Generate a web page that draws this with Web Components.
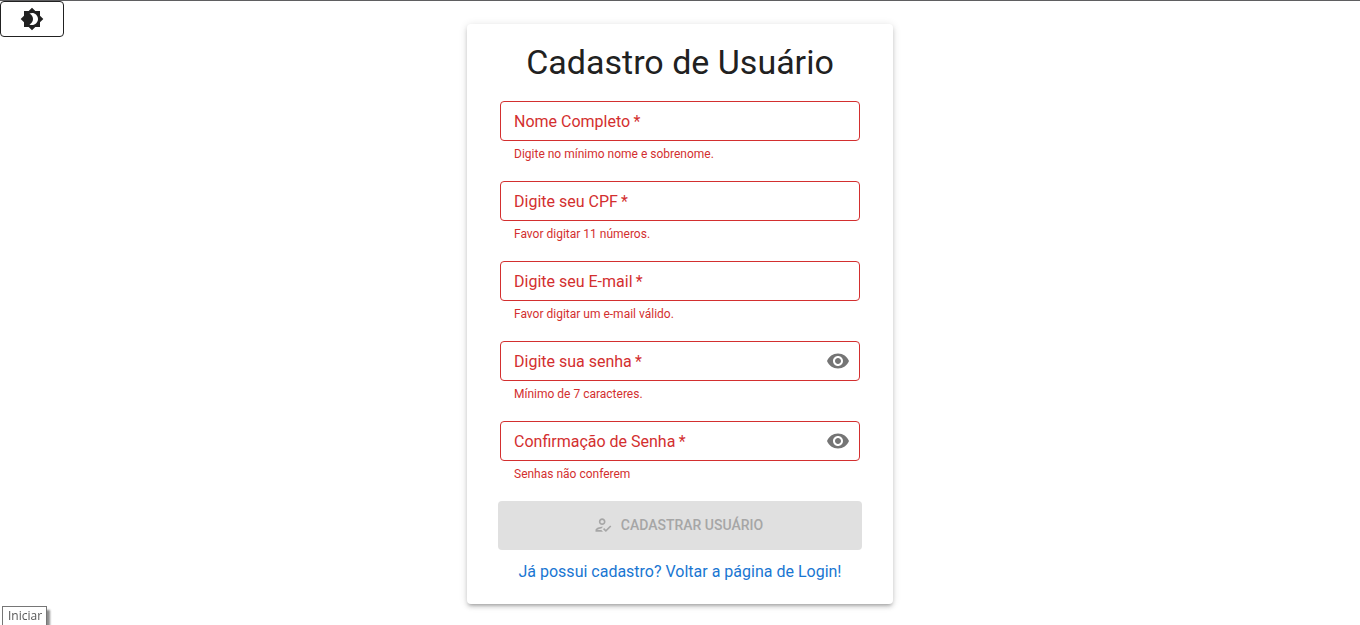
<!DOCTYPE html>
<html lang="pt-BR">
<head>
<meta charset="utf-8">
<meta name="viewport" content="width=device-width, initial-scale=1">
<title>Cadastro de Usuário</title>
<style>
  :root {
    --text: #212121;
    --error: #d32f2f;
    --primary: #1976d2;
    --muted: #757575;
  }
  body {
    margin: 0;
    font-family: Roboto, "Liberation Sans", sans-serif;
    font-size: 16px;
    line-height: 24px;
    color: var(--text);
    background: #fff;
  }
</style>
</head>
<body>
<signup-page>
  <theme-toggle slot="tools"></theme-toggle>
  <form-card heading="Cadastro de Usuário">
    <text-field label="Nome Completo" hint="Digite no mínimo nome e sobrenome."></text-field>
    <text-field label="Digite seu CPF" hint="Favor digitar 11 números."></text-field>
    <text-field label="Digite seu E-mail" type="email" hint="Favor digitar um e-mail válido."></text-field>
    <text-field label="Digite sua senha" type="password" hint="Mínimo de 7 caracteres."></text-field>
    <text-field label="Confirmação de Senha" type="password" hint="Senhas não conferem"></text-field>
    <submit-button slot="action">Cadastrar Usuário</submit-button>
    <login-link slot="footer" href="#login">Já possui cadastro? Voltar a página de Login!</login-link>
  </form-card>
  <status-tip slot="tip">Iniciar</status-tip>
</signup-page>

<script>
const shadow = (host, html) => {
  const root = host.attachShadow({ mode: 'open' });
  root.innerHTML = `<style>*{box-sizing:border-box}</style>${html}`;
  return root;
};

customElements.define('signup-page', class extends HTMLElement {
  constructor() {
    super();
    shadow(this, `
      <style>
        :host { display: block; }
        .page {
          display: grid;
          grid-template-columns: 1fr minmax(0, 426px) 1fr;
          align-items: start;
          min-height: 100vh;
          border-top: 1px solid #5f5f61;
        }
        main { padding: 23px 0 20px; }
      </style>
      <div class="page">
        <slot name="tools"></slot>
        <main><slot></slot></main>
      </div>
      <slot name="tip"></slot>`);
  }
});

customElements.define('theme-toggle', class extends HTMLElement {
  constructor() {
    super();
    shadow(this, `
      <style>
        :host { display: flex; }
        button {
          display: flex; align-items: center; justify-content: center;
          width: 64px; height: 36px; padding: 0;
          border: 1px solid var(--text); border-radius: 4px;
          background: #fff; color: var(--text); cursor: pointer;
        }
        svg { width: 24px; height: 24px; fill: currentColor; }
      </style>
      <button type="button" aria-label="Alternar tema">
        <svg viewBox="0 0 24 24" aria-hidden="true"><path d="M20 8.69V4h-4.69L12 .69 8.69 4H4v4.69L.69 12 4 15.31V20h4.69L12 23.31 15.31 20H20v-4.69L23.31 12 20 8.69zM12 18c-.89 0-1.74-.2-2.5-.55C11.56 16.5 13 14.42 13 12s-1.44-4.5-3.5-5.45C10.26 6.2 11.11 6 12 6c3.31 0 6 2.69 6 6s-2.69 6-6 6z"/></svg>
      </button>`);
  }
});

customElements.define('form-card', class extends HTMLElement {
  constructor() {
    super();
    shadow(this, `
      <style>
        :host { display: block; }
        form {
          display: flex; flex-direction: column;
          padding: 17px 31px 20px;
          border-radius: 4px; background: #fff;
          box-shadow: 0 3px 3px -2px rgba(0,0,0,.2), 0 3px 4px 0 rgba(0,0,0,.14), 0 1px 8px 0 rgba(0,0,0,.12);
        }
        h1 {
          margin: 0 0 18px; text-align: center;
          font-size: 34px; font-weight: 400; line-height: 42px;
        }
        .fields {
          display: flex; flex-direction: column; gap: 17px;
          padding: 0 2px; margin-bottom: 17px;
        }
        .footer { margin-top: 10px; text-align: center; }
      </style>
      <form novalidate>
        <h1></h1>
        <div class="fields"><slot></slot></div>
        <slot name="action"></slot>
        <div class="footer"><slot name="footer"></slot></div>
      </form>`).querySelector('h1').textContent = this.getAttribute('heading');
  }
});

customElements.define('text-field', class extends HTMLElement {
  constructor() {
    super();
    const type = this.getAttribute('type') || 'text';
    const root = shadow(this, `
      <style>
        :host { display: block; color: var(--error); }
        .box {
          display: grid; grid-template-columns: 1fr auto; align-items: center;
          height: 40px; border: 1px solid var(--error); border-radius: 4px;
        }
        input {
          grid-area: 1 / 1; width: 100%; height: 38px; padding: 0 13px;
          border: 0; outline: 0; background: none; font: inherit; color: var(--text);
        }
        label { grid-area: 1 / 1; padding: 2px 13px 0; pointer-events: none; }
        input:focus ~ label, input:not(:placeholder-shown) ~ label { visibility: hidden; }
        button {
          display: flex; margin-right: 9px; padding: 0; border: 0;
          background: none; color: var(--muted); cursor: pointer;
        }
        svg { width: 24px; height: 24px; fill: currentColor; }
        p { margin: 3px 14px 0; font-size: 12px; line-height: 20px; }
      </style>
      <div class="box">
        <input id="field" placeholder=" " required aria-invalid="true" aria-describedby="hint">
        <label for="field"><span class="name"></span><span aria-hidden="true">&thinsp;*</span></label>
        ${type === 'password' ? `<button type="button" aria-label="Mostrar senha">
          <svg viewBox="0 0 24 24" aria-hidden="true"><path d="M12 4.5C7 4.5 2.73 7.61 1 12c1.73 4.39 6 7.5 11 7.5s9.27-3.11 11-7.5c-1.73-4.39-6-7.5-11-7.5zM12 17c-2.76 0-5-2.24-5-5s2.24-5 5-5 5 2.24 5 5-2.24 5-5 5zm0-8c-1.66 0-3 1.34-3 3s1.34 3 3 3 3-1.34 3-3-1.34-3-3-3z"/></svg>
        </button>` : ''}
      </div>
      <p id="hint"></p>`);
    const input = root.querySelector('input');
    input.type = type;
    root.querySelector('.name').textContent = this.getAttribute('label');
    root.querySelector('p').textContent = this.getAttribute('hint');
    root.querySelector('button')?.addEventListener('click', () => {
      input.type = input.type === 'password' ? 'text' : 'password';
    });
  }
});

customElements.define('submit-button', class extends HTMLElement {
  constructor() {
    super();
    shadow(this, `
      <style>
        :host { display: block; }
        button {
          display: flex; align-items: center; justify-content: center; gap: 8px;
          width: 100%; height: 49px; padding: 0 4px 2px 0;
          border: 0; border-radius: 4px; background: #e0e0e0; color: #a6a6a6;
          font: 500 14px/24px Roboto, "Liberation Sans", sans-serif; text-transform: uppercase;
        }
        svg { width: 20px; height: 20px; fill: currentColor; }
      </style>
      <button type="submit" disabled>
        <svg viewBox="0 0 24 24" aria-hidden="true"><path d="M11 12c2.21 0 4-1.79 4-4s-1.79-4-4-4-4 1.79-4 4 1.79 4 4 4zm0-6c1.1 0 2 .9 2 2s-.9 2-2 2-2-.9-2-2 .9-2 2-2zM5 18c.2-.63 2.57-1.68 4.96-1.94l2.04-2c-.39-.04-.68-.06-1-.06-2.67 0-8 1.34-8 4v2h9l-2-2H5zm15.6-5.5l-5.13 5.17-2.07-2.08L12 17l3.47 3.5L22 13.91z"/></svg>
        <span><slot></slot></span>
      </button>`);
  }
});

customElements.define('login-link', class extends HTMLElement {
  constructor() {
    super();
    shadow(this, `
      <style>
        :host { display: inline; }
        a { color: var(--primary); text-decoration: none; }
      </style>
      <a><slot></slot></a>`).querySelector('a').href = this.getAttribute('href');
  }
});

customElements.define('status-tip', class extends HTMLElement {
  constructor() {
    super();
    shadow(this, `
      <style>
        :host {
          position: fixed; left: 2px; bottom: -1px;
          padding: 0 4px 0 5px; border: 1px solid #767676; background: #fff;
          box-shadow: 3px 4px 2px rgba(0,0,0,.45);
          color: #575757; font: 12px/18px "Open Sans", "Noto Sans", sans-serif;
        }
      </style>
      <slot></slot>`);
  }
});
</script>
</body>
</html>
